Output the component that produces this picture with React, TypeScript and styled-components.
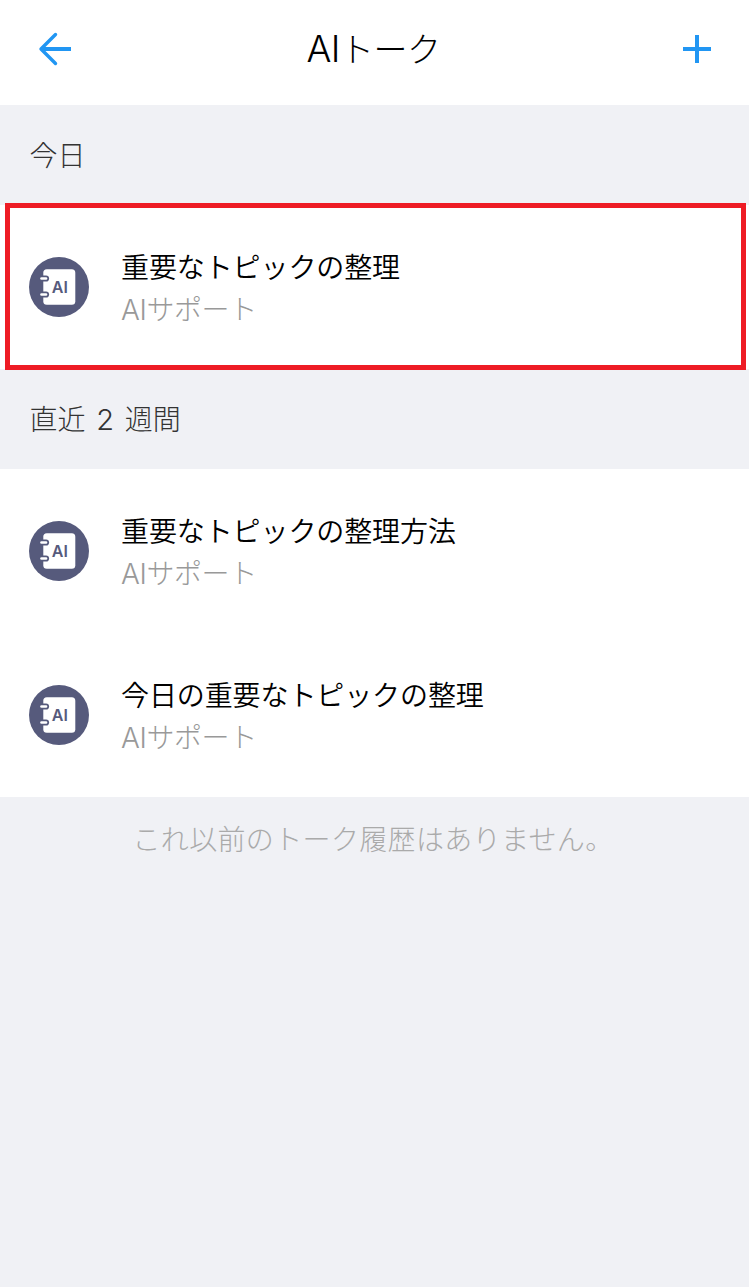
import React from "react";
import styled, { createGlobalStyle } from "styled-components";

const GlobalStyle = createGlobalStyle`
  * { box-sizing: border-box; }
  body {
    margin: 0;
    background: #f0f1f5;
    font-family: "Noto Sans CJK JP", "Noto Sans", sans-serif;
  }
`;

const Screen = styled.div`
  width: 749px;
  min-height: 1287px;
  background: #f0f1f5;
`;

const Header = styled.header`
  display: flex;
  align-items: flex-start;
  justify-content: space-between;
  height: 105px;
  padding: 29px 32px 0 34px;
  background: #fff;
`;

const Title = styled.h1`
  margin: -1px 4px 0 0;
  font-size: 34px;
  line-height: 40px;
  font-weight: 300;
  letter-spacing: -0.5px;
  color: #000;
  white-space: nowrap;
`;

const Latin = styled.span`
  font-family: Inter, "Noto Sans", sans-serif;
  font-weight: 300;
`;

const TitleLatin = styled(Latin)`
  font-size: 37px;
`;

const Count = styled(Latin)`
  margin: 0 2.500px;
  font-size: 29px;
`;

const IconButton = styled.button`
  display: flex;
  width: 40px;
  height: 40px;
  padding: 0;
  border: 0;
  background: none;
`;

const SectionTitle = styled.h2`
  height: 100px;
  margin: 0;
  padding: 29px 30px 0 29.5px;
  font-size: 28px;
  line-height: 40px;
  font-weight: 300;
  color: #333;
  white-space: pre;
`;

const List = styled.ul`
  margin: 0;
  padding: 0;
  list-style: none;
  background: #fff;
`;

const Row = styled.li<{ $selected?: boolean }>`
  position: relative;
  display: flex;
  align-items: center;
  gap: 32px;
  height: 164px;
  padding: 0 29px;

  &::after {
    content: ${(p) => (p.$selected ? '""' : "none")};
    position: absolute;
    inset: -2px 3px -1px 5px;
    border: 5px solid #ee1c25;
  }
`;

const RowText = styled.div`
  display: flex;
  flex-direction: column;
  margin-top: 2px;
`;

const RowTitle = styled.span`
  font-size: 28px;
  line-height: 42px;
  font-weight: 350;
  letter-spacing: -0.1px;
  color: #000;
`;

const RowSource = styled.span`
  font-size: 28px;
  line-height: 42px;
  font-weight: 300;
  letter-spacing: -0.400px;
  color: #999;
`;

const Note = styled.p`
  margin: 0;
  padding: 21px 3px 0 0;
  text-align: center;
  font-size: 28px;
  line-height: 40px;
  font-weight: 300;
  letter-spacing: 0.35px;
  color: #aaa;
`;

const Avatar = styled.svg`
  display: block;
  flex: none;
`;

function NotebookAvatar() {
  return (
    <Avatar width="60" height="60" viewBox="0 0 60 60">
      <circle cx="30" cy="30" r="30" fill="#565a7c" />
      <rect x="14.3" y="12.2" width="32" height="35.6" rx="3.5" fill="#fff" />
      {[21.5, 37.5].map((y) => (
        <g key={y} fill="none" strokeLinecap="round">
          <path d={`M13 ${y}h4`} stroke="#565a7c" strokeWidth="6.200" />
          <path d={`M12.500 ${y}h4.500`} stroke="#fff" strokeWidth="2.600" />
        </g>
      ))}
      <text
        x="30.8"
        y="35.5"
        textAnchor="middle"
        fontFamily="Inter, sans-serif"
        fontWeight="600"
        fontSize="16"
        fill="#565a7c"
      >
        AI
      </text>
    </Avatar>
  );
}

interface Talk {
  title: string;
  selected?: boolean;
}

function TalkList({ talks }: { talks: Talk[] }) {
  return (
    <List>
      {talks.map((talk) => (
        <Row key={talk.title} $selected={talk.selected}>
          <NotebookAvatar />
          <RowText>
            <RowTitle>{talk.title}</RowTitle>
            <RowSource>
              <Latin>AI</Latin>サポート
            </RowSource>
          </RowText>
        </Row>
      ))}
    </List>
  );
}

export default function App() {
  return (
    <Screen>
      <GlobalStyle />
      <Header>
        <IconButton aria-label="戻る">
          <svg width="40" height="40" viewBox="0 0 40 40" fill="none" stroke="#2196f3" strokeWidth="4">
            <path d="M37 20H8" />
            <path d="M21.5 5.5L7 20l14.500 14.500" strokeLinecap="round" strokeLinejoin="round" strokeWidth="3.400" />
          </svg>
        </IconButton>
        <Title>
          <TitleLatin>AI</TitleLatin>トーク
        </Title>
        <IconButton aria-label="追加">
          <svg width="40" height="40" viewBox="0 0 40 40" fill="none" stroke="#2196f3" strokeWidth="4">
            <path d="M6 20h28M20 6v28" />
          </svg>
        </IconButton>
      </Header>
      <SectionTitle>今日</SectionTitle>
      <TalkList talks={[{ title: "重要なトピックの整理", selected: true }]} />
      <SectionTitle>
        直近<Count> 2 </Count>週間
      </SectionTitle>
      <TalkList
        talks={[
          { title: "重要なトピックの整理方法" },
          { title: "今日の重要なトピックの整理" },
        ]}
      />
      <Note>これ以前のトーク履歴はありません。</Note>
    </Screen>
  );
}
